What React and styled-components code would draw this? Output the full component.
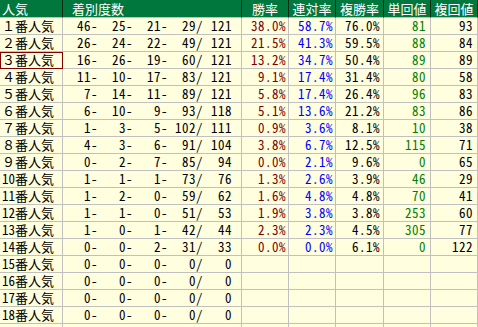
import React from "react";
import styled, { createGlobalStyle, css } from "styled-components";

const Global = createGlobalStyle`
  html, body { margin: 0; padding: 0; background: #ffffe0; overflow: hidden; }
  body { font-family: "Noto Sans Mono CJK JP", "Noto Sans CJK JP", "DejaVu Sans Mono", monospace; }
`;

const Grid = styled.div`
  display: grid;
  grid-template-columns: 63px 179px 47px 47px 48px 47px 47px;
  width: 478px;
  font-size: 13px;
  line-height: 16px;
  background: #ffffe0;
`;

const cellBase = css`
  box-sizing: border-box;
  height: 17px;
  border-right: 1px solid #c0c0c0;
  border-bottom: 1px solid #c0c0c0;
  white-space: pre;
`;

const HeadCell = styled.div`
  box-sizing: border-box;
  height: 18px;
  line-height: 17px;
  background: #00773c;
  color: #ffffff;
  border-right: 1px solid #0a2a14;
  border-bottom: 1px solid #c0c0c0;
  text-align: ${(p) => p.$align || "center"};
  padding-left: ${(p) => p.$pad || 0}px;
  white-space: pre;
`;

const LabelCell = styled.div`
  ${cellBase};
  padding-left: 2px;
  color: #000;
  ${(p) =>
    p.$selected &&
    css`
      border-right-color: #800000;
      border-bottom-color: #800000;
      box-shadow: inset 1px 1px 0 #800000;
    `}
`;

const CountCell = styled.div`
  ${cellBase};
  display: grid;
  grid-template-columns: 35px 35px 35px 35px 29px;
  color: #000;
  letter-spacing: 0.5px;
`;

const CountPart = styled.span`
  text-align: right;
`;

const NumCell = styled.div`
  ${cellBase};
  text-align: right;
  padding-right: ${(p) => p.$pad || 0}px;
  color: ${(p) => p.$color || "#000"};
  letter-spacing: 0.5px;
`;

const rows = [
  ["１番人気", [46, 25, 21, 29, 121], "38.0%", "58.7%", "76.0%", "81", "93"],
  ["２番人気", [26, 24, 22, 49, 121], "21.5%", "41.3%", "59.5%", "88", "84"],
  ["３番人気", [16, 26, 19, 60, 121], "13.2%", "34.7%", "50.4%", "89", "89"],
  ["４番人気", [11, 10, 17, 83, 121], "9.1%", "17.4%", "31.4%", "80", "58"],
  ["５番人気", [7, 14, 11, 89, 121], "5.8%", "17.4%", "26.4%", "96", "83"],
  ["６番人気", [6, 10, 9, 93, 118], "5.1%", "13.6%", "21.2%", "83", "86"],
  ["７番人気", [1, 3, 5, 102, 111], "0.9%", "3.6%", "8.1%", "10", "38"],
  ["８番人気", [4, 3, 6, 91, 104], "3.8%", "6.7%", "12.5%", "115", "71"],
  ["９番人気", [0, 2, 7, 85, 94], "0.0%", "2.1%", "9.6%", "0", "65"],
  ["10番人気", [1, 1, 1, 73, 76], "1.3%", "2.6%", "3.9%", "46", "29"],
  ["11番人気", [1, 2, 0, 59, 62], "1.6%", "4.8%", "4.8%", "70", "41"],
  ["12番人気", [1, 1, 0, 51, 53], "1.9%", "3.8%", "3.8%", "253", "60"],
  ["13番人気", [1, 0, 1, 42, 44], "2.3%", "2.3%", "4.5%", "305", "77"],
  ["14番人気", [0, 0, 2, 31, 33], "0.0%", "0.0%", "6.1%", "0", "122"],
  ["15番人気", [0, 0, 0, 0, 0], "", "", "", "", ""],
  ["16番人気", [0, 0, 0, 0, 0], "", "", "", "", ""],
  ["17番人気", [0, 0, 0, 0, 0], "", "", "", "", ""],
  ["18番人気", [0, 0, 0, 0, 0], "", "", "", "", ""],
];

const suffix = ["-", "-", "-", "/", ""];

export default function App() {
  return (
    <>
      <Global />
      <Grid>
        <HeadCell $align="left" $pad={2}>人気</HeadCell>
        <HeadCell $align="left" $pad={9}>着別度数</HeadCell>
        <HeadCell>勝率</HeadCell>
        <HeadCell>連対率</HeadCell>
        <HeadCell>複勝率</HeadCell>
        <HeadCell>単回値</HeadCell>
        <HeadCell>複回値</HeadCell>
        {rows.map(([label, counts, win, ren, fuku, tan, fk], i) => (
          <React.Fragment key={label}>
            <LabelCell $selected={i === 2}>{label}</LabelCell>
            <CountCell>
              {counts.map((c, j) => (
                <CountPart key={j}>{`${c}${suffix[j]}`}</CountPart>
              ))}
            </CountCell>
            <NumCell $color="#800000" $pad={2}>{win}</NumCell>
            <NumCell $color="#0000ff" $pad={2}>{ren}</NumCell>
            <NumCell $color="#000000" $pad={3}>{fuku}</NumCell>
            <NumCell $color="#008000" $pad={4}>{tan}</NumCell>
            <NumCell $color="#000000" $pad={4}>{fk}</NumCell>
          </React.Fragment>
        ))}
        <LabelCell />
        <CountCell />
        <NumCell />
        <NumCell />
        <NumCell />
        <NumCell />
        <NumCell />
      </Grid>
    </>
  );
}
